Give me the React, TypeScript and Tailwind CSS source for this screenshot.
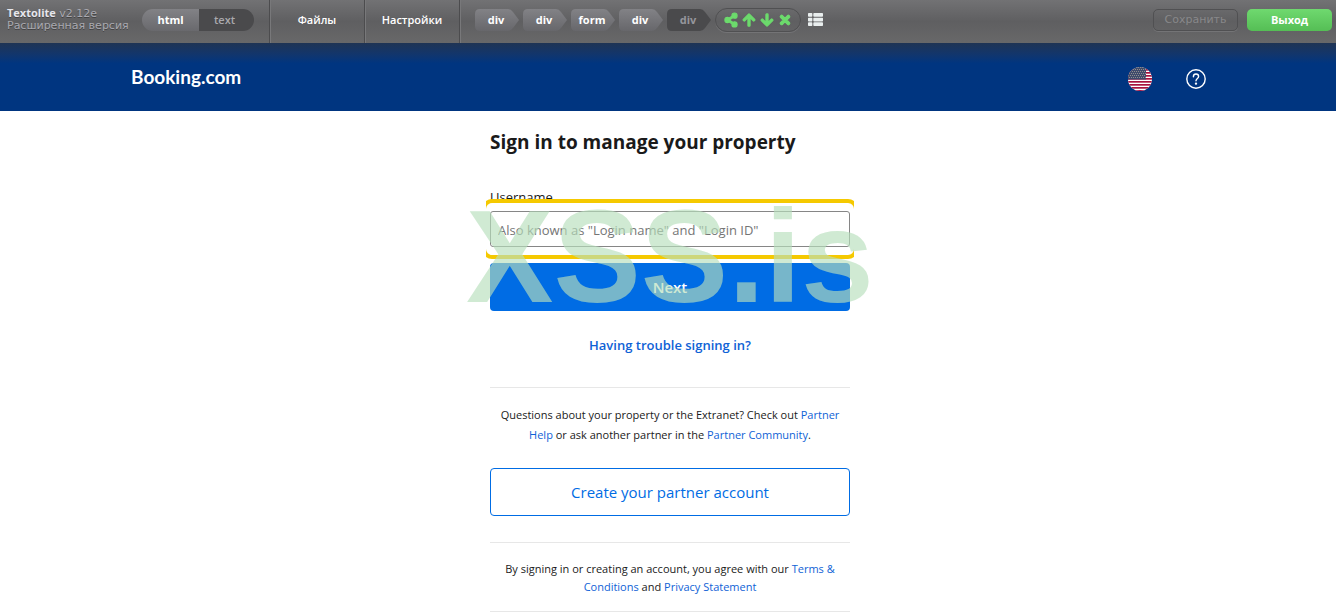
import React, { useState } from 'react';
import { FaShareAlt, FaArrowUp, FaArrowDown, FaTimes, FaThList } from 'react-icons/fa';

const path = ['div', 'div', 'form', 'div', 'div'];

const tools = [
    { label: 'Share', icon: FaShareAlt },
    { label: 'Up', icon: FaArrowUp },
    { label: 'Down', icon: FaArrowDown },
    { label: 'Remove', icon: FaTimes },
];

const Crumb: React.FC<{ name: string; active: boolean }> = ({ name, active }) => (
    <button className={`relative flex h-[22px] w-11 items-center justify-center pr-0.5 text-[11px] font-bold ${active ? 'text-[#96969c]' : 'text-white'}`}>
        <svg className="absolute inset-0 h-full w-full" viewBox="0 0 44 22" aria-hidden="true">
            <defs>
                <linearGradient id="crumb" x1="0" y1="0" x2="0" y2="1">
                    <stop offset="0" stopColor="#828286" />
                    <stop offset="1" stopColor="#67676b" />
                </linearGradient>
            </defs>
            <path
                d="M5 0H33Q36 0 38 3L44 11L38 19Q36 22 33 22H5Q0 22 0 17V5Q0 0 5 0Z"
                fill={active ? '#4a4a4c' : 'url(#crumb)'}
            />
        </svg>
        <span className="relative">{name}</span>
    </button>
);

const Toolbar: React.FC = () => {
    const [mode, setMode] = useState('html');

    return (
        <div className="flex h-[43px] items-stretch bg-linear-to-b from-[#727274] via-[#5f5f61] to-[#686869] font-['Open_Sans','Noto_Sans',sans-serif]">
            <div className="w-[142px] shrink-0 pt-[7px] pl-[7px] font-['DejaVu_Sans',sans-serif] text-[11px] leading-3 whitespace-nowrap text-[#a9a9b0] [text-shadow:0_1px_0_#444]">
                <div><b className="font-['Open_Sans',sans-serif] text-[11px] leading-3 text-[#e6e6ec]">Textolite</b> v2.12e</div>
                <div>Расширенная версия</div>
            </div>
            <div className="mt-[9px] mr-[15px] flex h-[22px] overflow-hidden rounded-full text-[11px]">
                <button onClick={() => setMode('html')} className={`w-[57px] font-bold ${mode === 'html' ? 'bg-linear-to-b from-[#828286] to-[#69696d] text-white' : 'bg-[#4a4a4c] text-[#a9a9ad]'}`}>html</button>
                <button onClick={() => setMode('text')} className={`w-[55px] pr-1 font-semibold ${mode === 'text' ? 'bg-linear-to-b from-[#828286] to-[#69696d] text-white' : 'bg-[#4a4a4c] text-[#a9a9ad]'}`}>text</button>
            </div>
            {['Файлы', 'Настройки'].map((item) => (
                <button key={item} className="w-[95px] border-l border-[#4c4c4e] pb-[3px] text-[11px] font-semibold text-white shadow-[inset_1px_0_0_#78787a]">
                    {item}
                </button>
            ))}
            <div className="flex items-start border-l border-[#4c4c4e] pt-[9px] pl-[15px] shadow-[inset_1px_0_0_#78787a]">
                <div className="flex gap-1">
                    {path.map((name, index) => (
                        <Crumb key={index} name={name} active={index === path.length - 1} />
                    ))}
                </div>
                <div className="-mt-px ml-1 flex h-6 w-[86px] items-center justify-center gap-1 rounded-full border border-[#505052] text-[#6cdb6c] shadow-[0_1px_0_#747476]">
                    {tools.map(({ label, icon: Icon }) => (
                        <button key={label} aria-label={label}><Icon size={14} className="overflow-visible stroke-current stroke-[40]" /></button>
                    ))}
                </div>
                <button aria-label="List" className="mt-[3px] ml-[7px] text-[#e9eeee]"><FaThList size={15} /></button>
            </div>
            <div className="mt-[9px] mr-1 ml-auto flex h-[22px] gap-[9px] font-['DejaVu_Sans',sans-serif] text-[11px]">
                <button className="w-[85px] rounded-[5px] border border-[#505052] text-[#88888a] shadow-[0_1px_0_#747476]">Сохранить</button>
                <button className="w-[85px] rounded-[5px] bg-linear-to-b from-[#6fd96f] to-[#55be55] font-['Open_Sans',sans-serif] text-[11px] font-bold text-white">Выход</button>
            </div>
        </div>
    );
};

const FlagIcon: React.FC = () => (
    <svg width="24" height="24" viewBox="0 0 24 24" role="img" aria-label="English (US)">
        <clipPath id="flag"><circle cx="12" cy="12" r="12" /></clipPath>
        <g clipPath="url(#flag)">
            <rect width="24" height="24" fill="#fff" />
            {[2, 5, 8, 11, 14, 17, 20, 23].map((y) => (
                <rect key={y} y={y} width="24" height="1.7" fill="#a8123f" />
            ))}
            <rect width="18" height="12.5" fill="#3f4a6c" />
            {[1, 3, 5, 7, 9, 11].map((y) => (
                <line key={y} x1={y % 4 === 1 ? 0 : 1} x2="18" y1={y - 0.5} y2={y - 0.5} stroke="#8f8f8c" strokeDasharray="1 1" />
            ))}
        </g>
    </svg>
);

const HelpIcon: React.FC = () => (
    <svg width="20" height="20" viewBox="0 0 20 20" fill="none" stroke="#fff" strokeWidth="1.4" strokeLinecap="round" aria-hidden="true">
        <circle cx="10" cy="10" r="9.2" />
        <path d="M7.4 7.7C7.4 6 8.5 5 10 5s2.6 1 2.6 2.5c0 2-2.6 2-2.6 4.3" />
        <circle cx="10" cy="14.6" r="0.5" fill="#fff" />
    </svg>
);

const App: React.FC = () => {
    return (
        <div className="min-h-screen overflow-x-hidden bg-white font-['Open_Sans','Noto_Sans',sans-serif] text-[#1a1a1a]">
            <Toolbar />
            <header className="h-[68px] bg-linear-to-b from-[#1f3454] to-[#003580] to-30%">
                <div className="mx-auto flex h-full max-w-[1100px] items-center justify-between px-3 pt-1">
                    <a href="#" className="pb-1 pl-px font-['Lato',sans-serif] text-[19px] leading-6 font-bold text-white">Booking.com</a>
                    <div className="flex items-center gap-[34px]">
                        <button><FlagIcon /></button>
                        <button aria-label="Help"><HelpIcon /></button>
                    </div>
                </div>
            </header>

            <main className="pl-1">
                <div className="mx-auto w-full max-w-[360px]">
                    <h1 className="pt-[17px] text-[19px] leading-7 font-bold whitespace-nowrap">Sign in to manage your property</h1>

                    <form className="relative pt-[31px]" onSubmit={(e) => e.preventDefault()}>
                        <label htmlFor="username" className="block text-[13px] leading-5">Username</label>
                        <div className="relative mt-1 flex">
                            <input
                                id="username"
                                type="text"
                                placeholder={'Also known as "Login name" and "Login ID"'}
                                className="h-9 w-full rounded-[3px] border border-[#868686] px-[7px] pt-0.5 text-[13px] placeholder:text-[#757575]"
                            />
                            {/* selected element frame */}
                            <div className="pointer-events-none absolute -inset-x-1 -inset-y-3 overflow-hidden">
                                <div className="absolute -inset-x-1 inset-y-0 rounded-[10px] border-4 border-[#f5c900]" />
                            </div>
                        </div>
                        <button className="mt-4 block h-12 w-full rounded-[4px] bg-[#006ce4] text-[15px] font-semibold text-white">Next</button>
                        <div className="pointer-events-none absolute top-[26px] left-1/2 -translate-x-1/2 font-['Liberation_Sans',sans-serif] text-[131px] leading-[150px] font-bold text-[#b7dfbc]/65">
                            XSS.is
                        </div>
                    </form>

                    <div className="pt-6 pb-8 text-center text-[13px] leading-5">
                        <a href="#" className="font-semibold text-[#0f62d6]">Having trouble signing in?</a>
                    </div>

                    <p className="border-t border-[#e7e7e7] pt-[17px] text-center text-[11px] leading-5">
                        Questions about your property or the Extranet? Check out <a href="#" className="text-[#0f62d6]">Partner Help</a> or ask another partner in the <a href="#" className="text-[#0f62d6]">Partner Community</a>.
                    </p>

                    <a href="#" className="mt-[23px] mb-[26px] flex h-12 items-center justify-center rounded-[4px] border border-[#006ce4] text-[15px] font-medium text-[#006ce4]">
                        Create your partner account
                    </a>

                    <p className="border-y border-[#e7e7e7] pt-[17px] pb-[15px] text-center text-[11px] leading-[18px]">
                        By signing in or creating an account, you agree with our <a href="#" className="text-[#0f62d6]">Terms &amp; Conditions</a> and <a href="#" className="text-[#0f62d6]">Privacy Statement</a>
                    </p>
                </div>
            </main>
        </div>
    );
};

export default App;
